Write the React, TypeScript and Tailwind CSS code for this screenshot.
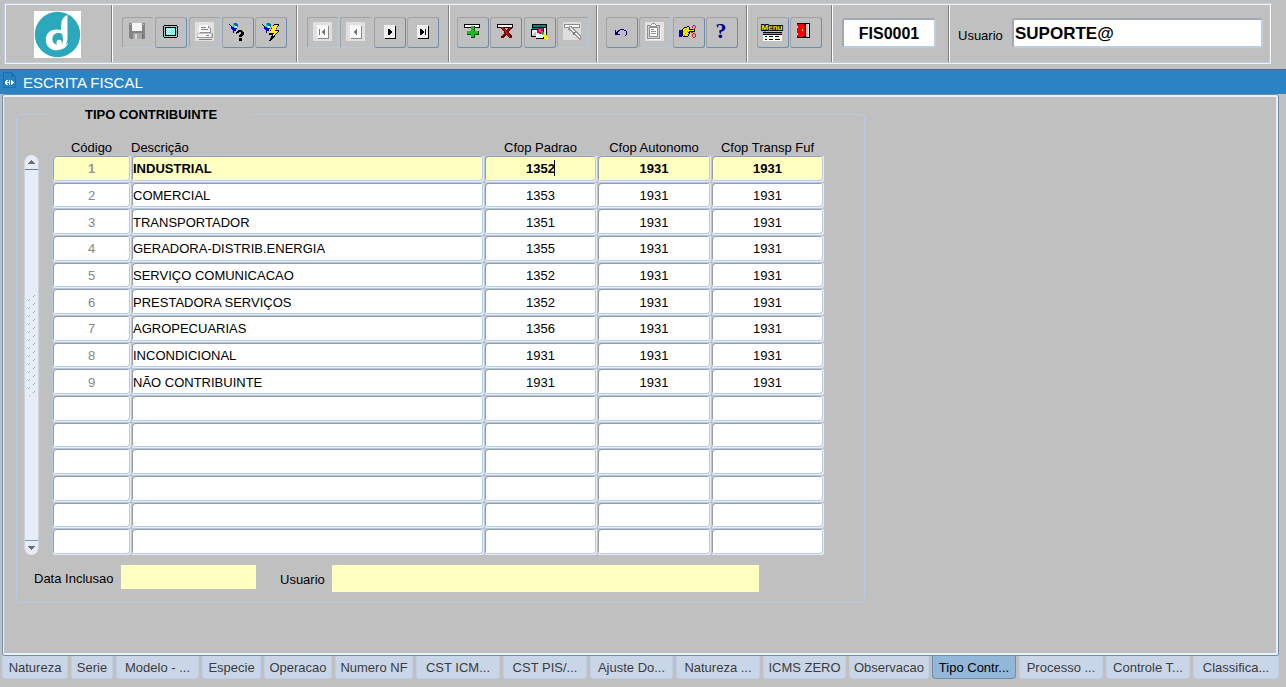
import type { ReactNode } from "react";
import clsx from "clsx";

interface Row {
  codigo: string;
  descricao: string;
  padrao: string;
  autonomo: string;
  transp: string;
}

const ROWS: Row[] = [
  { codigo: "1", descricao: "INDUSTRIAL", padrao: "1352", autonomo: "1931", transp: "1931" },
  { codigo: "2", descricao: "COMERCIAL", padrao: "1353", autonomo: "1931", transp: "1931" },
  { codigo: "3", descricao: "TRANSPORTADOR", padrao: "1351", autonomo: "1931", transp: "1931" },
  { codigo: "4", descricao: "GERADORA-DISTRIB.ENERGIA", padrao: "1355", autonomo: "1931", transp: "1931" },
  { codigo: "5", descricao: "SERVIÇO COMUNICACAO", padrao: "1352", autonomo: "1931", transp: "1931" },
  { codigo: "6", descricao: "PRESTADORA SERVIÇOS", padrao: "1352", autonomo: "1931", transp: "1931" },
  { codigo: "7", descricao: "AGROPECUARIAS", padrao: "1356", autonomo: "1931", transp: "1931" },
  { codigo: "8", descricao: "INCONDICIONAL", padrao: "1931", autonomo: "1931", transp: "1931" },
  { codigo: "9", descricao: "NÃO CONTRIBUINTE", padrao: "1931", autonomo: "1931", transp: "1931" },
];

const EMPTY: Row = { codigo: "", descricao: "", padrao: "", autonomo: "", transp: "" };
const VISIBLE_ROWS = 15;

const COLUMNS: { key: keyof Row; label: string; width: string; align: string }[] = [
  { key: "codigo", label: "Código", width: "w-[79px]", align: "text-center" },
  { key: "descricao", label: "Descrição", width: "w-[353px]", align: "text-left" },
  { key: "padrao", label: "Cfop Padrao", width: "w-[113px]", align: "text-center" },
  { key: "autonomo", label: "Cfop Autonomo", width: "w-[114px]", align: "text-center" },
  { key: "transp", label: "Cfop Transp Fuf", width: "w-[113px]", align: "text-center" },
];

const TABS = [
  { label: "Natureza", width: "w-[66px]" },
  { label: "Serie", width: "w-[42px]" },
  { label: "Modelo - ...", width: "w-[83px]" },
  { label: "Especie", width: "w-[59px]" },
  { label: "Operacao", width: "w-[68px]" },
  { label: "Numero NF", width: "w-[78px]" },
  { label: "CST ICM...", width: "w-[84px]" },
  { label: "CST PIS/...", width: "w-[84px]" },
  { label: "Ajuste Do...", width: "w-[83px]" },
  { label: "Natureza ...", width: "w-[84px]" },
  { label: "ICMS ZERO", width: "w-[83px]" },
  { label: "Observacao", width: "w-[80px]" },
  { label: "Tipo Contr...", width: "w-[84px]" },
  { label: "Processo ...", width: "w-[84px]" },
  { label: "Controle T...", width: "w-[84px]" },
  { label: "Classifica...", width: "w-[86px]" },
];

const ACTIVE_TAB = "Tipo Contr...";

function Icon({ children }: { children: ReactNode }) {
  return (
    <svg
      width="20"
      height="21"
      viewBox="0 0 20 21"
      shapeRendering="crispEdges"
      aria-hidden="true"
      className="shrink-0 overflow-visible"
    >
      {children}
    </svg>
  );
}

function SaveIcon() {
  return (
    <Icon>
      <path d="M1 1h16v16H2l-1-1z" fill="#848484" />
      <path d="M4 1h10v8H4z" fill="#f4f4f4" />
      <path d="M2 2h1v1H2zM15 2h1v1h-1z" fill="#c0c0c0" />
      <path d="M5 11h9v6H5z" fill="#a8a8a8" />
      <path d="M7 12h2v5H7z" fill="#d8d8d8" />
      <path d="M14 12h1v5h-1z" fill="#6a6a6a" />
    </Icon>
  );
}

function ScreenIcon() {
  return (
    <Icon>
      <path d="M3 3h13v1h1v11h-1v1H3v-1H2V4h1z" fill="#000" />
      <path d="M3 4h13v11H3z" fill="#c0c0c0" />
      <path d="M4 5h11v9H4z" fill="#000" />
      <path d="M5 6h9v7H5z" fill="#fff" />
      <path
        d="M5 6h1v1H5zM7 6h1v1H7zM9 6h1v1H9zM11 6h1v1h-1zM13 6h1v1h-1zM6 7h1v1H6zM8 7h1v1H8zM10 7h1v1h-1zM12 7h1v1h-1zM5 8h1v1H5zM7 8h1v1H7zM9 8h1v1H9zM11 8h1v1h-1zM13 8h1v1h-1zM6 9h1v1H6zM8 9h1v1H8zM10 9h1v1h-1zM12 9h1v1h-1zM5 10h1v1H5zM7 10h1v1H7zM9 10h1v1H9zM11 10h1v1h-1zM13 10h1v1h-1zM6 11h1v1H6zM8 11h1v1H8zM10 11h1v1h-1zM12 11h1v1h-1zM5 12h1v1H5zM7 12h1v1H7zM9 12h1v1H9zM11 12h1v1h-1zM13 12h1v1h-1z"
        fill="#7edce6"
      />
    </Icon>
  );
}

function PrintIcon() {
  return (
    <Icon>
      <path d="M0 0h19v19H0z" fill="#e2e2e2" />
      <path d="M5 4h9v1h1v1h1v5H5z" fill="#929292" />
      <path d="M4 3h9v3h2v4H4z" fill="#fafafa" />
      <path d="M6 5h5v1H6zM6 7h7v1H6z" fill="#808080" />
      <path d="M2 11h15v5H2z" fill="#c4c4c4" />
      <path d="M3 12h13v3H3z" fill="#f6f6f6" />
      <path d="M2 15h16v1H2zM17 11h1v4h-1z" fill="#9a9a9a" />
      <path d="M11 13h3v1h-3z" fill="#848484" />
      <path d="M4 17h13v1H4z" fill="#848484" />
    </Icon>
  );
}

function Flashlight() {
  return (
    <>
      <path d="M1 2h1v1h1v1h1v1h1v1H3V4H2V3H1z" fill="#000" />
      <path d="M5 1h2v1h1v2H6v2H4V4h1z" fill="#1fd3e6" />
      <path d="M6 1h3v1h1v3h-1v1H8V4H7V3H6z" fill="#0a6c88" />
      <path d="M7 4h2v2H7z" fill="#a8f4f8" />
      <path d="M3 5h3v1h2v1H7v2H5V8H4V7H3z" fill="#0000e0" />
      <path d="M7 6h2v1H8v2H6v2H5V9h2z" fill="#000060" />
    </>
  );
}

function EnterQueryIcon() {
  return (
    <Icon>
      <Flashlight />
      <path
        d="M7 10h1v1H7zM7 12h1v1H7zM9 14h1v1H9zM7 14h1v1H7zM9 16h1v1H9zM9 18h1v1H9zM11 13h1v1h-1zM15 18h1v1h-1zM17 18h1v1h-1zM15 16h1v1h-1zM17 16h1v1h-1zM17 14h1v1h-1zM17 12h1v1h-1zM17 10h1v1h-1zM15 14h1v1h-1zM16 9h1v1h-1z"
        fill="#f4e600"
      />
      <path d="M10 8h4v1h1v1h1v3h-1v1h-1v1h-3v-2h1v-1h1v-2h-2v1H9v1H8v-2h1V9h1z" fill="#000" />
      <path d="M11 16h3v3h-3z" fill="#000" />
    </Icon>
  );
}

function ExecuteQueryIcon() {
  return (
    <Icon>
      <Flashlight />
      <path d="M13 2h5v1l-3 5h3v1l-8 10H8l3-6H8v-2z" fill="#000" />
      <path d="M13 3h4l-3 6h3l-6 7 2-5H8z" fill="#fff000" />
    </Icon>
  );
}

/* Page with an arrow on it, shared by the record navigation buttons */
function NavIcon({ disabled, children }: { disabled?: boolean; children: ReactNode }) {
  return (
    <Icon>
      {disabled && <path d="M0 0h19v19H0z" fill="#e0e0e0" />}
      <path d="M5 4h11v13H5z" fill={disabled ? "#8c8c8c" : "#000"} />
      <path d="M4 3h11v13H4z" fill={disabled ? "#fafafa" : "#f0f0f0"} />
      <g fill={disabled ? "#7c7c7c" : "#000"}>{children}</g>
    </Icon>
  );
}

function InsertIcon() {
  return (
    <Icon>
      <path d="M1 2h16v4H1z" fill="#000" />
      <path d="M2 3h14v2H2z" fill="#fff" />
      <path d="M8 4h4v5h4v4h-4v3H8v-3H4V9h4z" fill="#005000" />
      <path d="M8 4h3v5h4v3h-4v3H8v-3H4V9h4z" fill="#10c020" />
    </Icon>
  );
}

function DeleteIcon() {
  return (
    <Icon>
      <path d="M1 2h16v4H1z" fill="#000" />
      <path d="M2 3h14v2H2z" fill="#fff" />
      <path
        d="M5 5h3v1h1v1h1v1h1V7h1V6h1V5h3v2h-1v1h-1v1h-1v2h1v1h1v1h1v3h-3v-1h-1v-1h-1v-1h-1v1H9v1H8v1H5v-2h1v-1h1v-1h1V9H7V8H6V7H5z"
        fill="#5c0000"
      />
      <path d="M5 5h2v1h1v1h1v1h1v1h1V8h1V7h1V6h1V5h1v1h-1v1h-1v1h-1v1h-1v2h1v1h1v1h1v2h-1v-1h-1v-1h-1v-1h-1v-1H9v1H8v1H7v1H6v-1h1v-1h1v-1h1V9H8V8H7V7H6V6H5z" fill="#c80c0c" />
    </Icon>
  );
}

function LockIcon() {
  return (
    <Icon>
      <path d="M2 2h15v11H2z" fill="#000" />
      <path d="M3 3h13v2H3z" fill="#108080" />
      <path d="M14 6h2v6h-2z" fill="#e8e8e8" />
      <path d="M1 7h13v10H6v-2H1z" fill="#000" />
      <path d="M2 8h11v8H6v-2H2z" fill="#f2f2f2" />
      <path d="M2 6h11v1H2z" fill="#108080" />
      <path d="M1 14l5-5v5z" fill="#c0c0c0" />
      <path d="M8 6h4v1h1v4h-2v1H9v-1H7V8h1z" fill="#d0004c" />
      <path d="M9 7h2v3H9z" fill="#f838d0" />
      <path d="M11 9h2v1h1v2h1v1h-3v-1h-1z" fill="#10b020" />
      <path d="M13 12h3v1h1v2h1v3h-2v-1h-2v-2h-1z" fill="#f8f000" />
      <path d="M6 16h8v1H6z" fill="#000" />
    </Icon>
  );
}

function ClearIcon() {
  return (
    <Icon>
      <path d="M0 0h18v18H0z" fill="#dedede" />
      <path d="M1 2h16v4H1z" fill="#8c8c8c" />
      <path d="M2 3h14v2H2z" fill="#fafafa" />
      <path d="M5 5h1V4h3v1h1v1h1v1h1v1h1v1h1v1h1v1h1v1h1v1h1v5h-2v-1h-1v-1h-1v-1h-1v-1h-1v-1h-1v-1h-1v-1H9v-1H8v-1H7V9H6V8H5z" fill="#9a9a9a" />
      <path d="M7 5h1v1h1v1h1v1h1v1h1v1h-2V9H9V8H8V7H7zM12 11h2v1h1v1h1v1h1v2h-1v-1h-1v-1h-1v-1h-1v-1h-1z" fill="#ececec" />
      <path d="M10 11h1v-1h1v2h-1v1h-1z" fill="#707070" />
    </Icon>
  );
}

function UndoIcon() {
  return (
    <Icon>
      <path d="M3 8h1v2h1v1h1v1h2v1H3z" fill="#000080" />
      <path d="M5 9h1V8h2V7h4v1h2v1h1v4h-1v1h-1v-1h1V9h-2V8H8v1H7v1H6v1H5z" fill="#000080" />
    </Icon>
  );
}

function ClipboardIcon() {
  return (
    <Icon>
      <path d="M0 0h19v19H0z" fill="#e2e2e2" />
      <path d="M2 3h13v14H2z" fill="#909090" />
      <path d="M3 4h11v12H3z" fill="#d4d4d4" />
      <path d="M4 5h9v10H4z" fill="#909090" />
      <path d="M5 6h7v8H5z" fill="#fafafa" />
      <path d="M6 2h1V1h3v1h1v1h1v2H5V3h1z" fill="#909090" />
      <path d="M7 2h3v1H7zM6 3h5v1H6z" fill="#f2f2f2" />
      <path d="M6 7h3v1H6zM6 9h5v1H6zM6 11h5v1H6z" fill="#909090" />
      <path d="M15 5h1v13H4v-1h11z" fill="#fafafa" />
    </Icon>
  );
}

function HandIcon() {
  return (
    <Icon>
      <path d="M0 8h3v7H0z" fill="#0000e8" />
      <path d="M3 7h1V6h1V5h3V4h2v1h1v2h5v3h-5v2h-1v2H9v1H4v-1H3z" fill="#000" />
      <path d="M4 7h1V6h3V5h2v3h5v1h-5v1H9v1h1v1H9v2H4z" fill="#f4e800" />
      <path d="M4 9h1v1H4zM6 7h1v1H6zM6 11h1v1H6zM8 9h1v1H8zM5 13h1v1H5zM8 12h1v1H8z" fill="#b09a00" />
      <path
        d="M13 4h1V3h2v1h1v2h-1v1h-1v1h-1V7h1V6h1V4h-2v2h-1zM12 10h2v1h2v1h1v3h-1v1h-2v-1h-1v-3h1v3h2v-3h-2v-1h-2z"
        fill="#f01010"
      />
    </Icon>
  );
}

function HelpIcon() {
  return (
    <Icon>
      <text x="9" y="16" textAnchor="middle" fontSize="22" fontWeight="bold" fontFamily="Liberation Serif, serif" fill="#000080">
        ?
      </text>
    </Icon>
  );
}

function MenuIcon() {
  return (
    <Icon>
      <text
        x="9"
        y="8"
        textAnchor="middle"
        fontSize="8"
        fontWeight="bold"
        fontFamily="Liberation Sans, sans-serif"
        fill="#fff000"
        stroke="#000"
        strokeWidth="2"
        paintOrder="stroke"
      >
        Menu
      </text>
      <path d="M0 11h19v8H0z" fill="#fff" />
      <path d="M0 10h19v1H0zM0 12h19v1H0z" fill="#000" />
      <path d="M0 11h19v1H0z" fill="#18c8c8" />
      <path d="M2 14h2v1H2zM6 14h4v1H6zM12 14h4v1h-4zM2 17h2v1H2zM6 17h4v1H6zM12 17h5v1h-5z" fill="#000" />
    </Icon>
  );
}

function ExitIcon() {
  return (
    <Icon>
      <path d="M1 1h13v15H1z" fill="#000" />
      <path d="M10 2h3v13h-3z" fill="#c0c0c0" />
      <path d="M12 2h1v13h-1z" fill="#e4e4e4" />
      <path d="M1 2h7v1h1v11H8v1H1z" fill="#f80000" />
      <path d="M6 7h1v2H6zM1 4h1v2H1zM1 11h1v2H1z" fill="#f8e800" />
    </Icon>
  );
}

function Logo() {
  return (
    <svg width="47" height="47" viewBox="0 0 47 47" role="img" aria-label="Logo">
      <path d="M0 0h47v47H0z" fill="#fff" />
      <circle cx="23.5" cy="23.5" r="22.7" fill="#2ba8bc" />
      <path
        d="M33.500 4C30 5.500 27.600 8 27.400 12.500L27 19C18 16.800 12 21 11.800 28.500C11.600 35.500 17 39.800 23 39.200C29.500 38.600 33.300 34 33.500 27z"
        fill="#fff"
      />
      <path
        d="M27 22.500C22 21 18.200 24 18.400 28.500C18.600 31.500 20.500 33.600 23 33.400C21.800 30.800 23.200 28.600 25.600 28.800C28 29 28.500 31.800 27.200 33.500C29.800 31 29 27.500 28.200 23.200z"
        fill="#2ba8bc"
      />
      <path d="M24 34.500C27 36.500 32 34.500 34 31.500C33 36.500 29 38.800 24 38.500z" fill="#fff" />
    </svg>
  );
}

function ToolButton({ label, disabled, children }: { label: string; disabled?: boolean; children: ReactNode }) {
  return (
    <button
      type="button"
      aria-label={label}
      disabled={disabled}
      className={clsx(
        "flex h-[31px] w-8 shrink-0 items-center justify-center rounded-[3px] border border-t-[#a2a2a6] border-l-[#a2a2a6]",
        disabled ? "border-r-[#b6c8de] border-b-[#b6c8de]" : "border-r-[#6c8cb0] border-b-[#6c8cb0]"
      )}
    >
      {children}
    </button>
  );
}

function Separator() {
  return <div className="w-0.5 shrink-0 border-l border-[#808080] bg-white" />;
}

function ToolGroup({ className, children }: { className: string; children: ReactNode }) {
  return <div className={clsx("flex shrink-0 items-start justify-between pt-3", className)}>{children}</div>;
}

function Toolbar() {
  return (
    <header className="mt-[3px] mr-[15px] ml-1 flex h-[61px] shrink-0 border border-t-[#bccde2] border-r-[#f2f6fb] border-b-[#f2f6fb] border-l-[#bccde2] p-px shadow-[inset_1px_1px_0_#f2f6fb,inset_-1px_-1px_0_#bccde2]">
      <div className="flex w-[105px] shrink-0 items-center justify-center pt-0.5 pr-0.5">
        <Logo />
      </div>
      <Separator />
      <ToolGroup className="w-[183px] px-[9px]">
        <ToolButton label="Salvar" disabled><SaveIcon /></ToolButton>
        <ToolButton label="Tela"><ScreenIcon /></ToolButton>
        <ToolButton label="Imprimir" disabled><PrintIcon /></ToolButton>
        <ToolButton label="Entrar consulta"><EnterQueryIcon /></ToolButton>
        <ToolButton label="Executar consulta"><ExecuteQueryIcon /></ToolButton>
      </ToolGroup>
      <Separator />
      <ToolGroup className="w-[150px] px-[9px]">
        <ToolButton label="Primeiro" disabled>
          <NavIcon disabled><path d="M6 7h1v6H6zM12 7v6h-1v-1h-1v-1H9v-2h1V8h1V7z" /></NavIcon>
        </ToolButton>
        <ToolButton label="Anterior" disabled>
          <NavIcon disabled><path d="M11 7v6h-1v-1H9v-1H8v-2h1V8h1V7z" /></NavIcon>
        </ToolButton>
        <ToolButton label="Próximo">
          <NavIcon><path d="M8 7h2v1h1v1h1v2h-1v1h-1v1H8z" /></NavIcon>
        </ToolButton>
        <ToolButton label="Último">
          <NavIcon><path d="M7 7h2v1h1v1h1v2h-1v1H9v1H7zM12 7h1v6h-1z" /></NavIcon>
        </ToolButton>
      </ToolGroup>
      <Separator />
      <ToolGroup className="w-[146px] px-[7px]">
        <ToolButton label="Inserir registro"><InsertIcon /></ToolButton>
        <ToolButton label="Excluir registro"><DeleteIcon /></ToolButton>
        <ToolButton label="Bloquear registro"><LockIcon /></ToolButton>
        <ToolButton label="Limpar registro" disabled><ClearIcon /></ToolButton>
      </ToolGroup>
      <Separator />
      <ToolGroup className="w-[148px] px-2">
        <ToolButton label="Desfazer"><UndoIcon /></ToolButton>
        <ToolButton label="Lista de valores" disabled><ClipboardIcon /></ToolButton>
        <ToolButton label="Recortar"><HandIcon /></ToolButton>
        <ToolButton label="Ajuda"><HelpIcon /></ToolButton>
      </ToolGroup>
      <Separator />
      <ToolGroup className="w-[83px] px-[9px]">
        <ToolButton label="Menu"><MenuIcon /></ToolButton>
        <ToolButton label="Sair"><ExitIcon /></ToolButton>
      </ToolGroup>
      <Separator />
      <div className="flex w-[115px] shrink-0 items-start pt-[13px] pr-3 pl-[9px]">
        <input
          aria-label="Programa"
          defaultValue="FIS0001"
          className="h-[30px] w-full rounded-[3px] border-2 border-t-[#a0a8b6] border-r-[#bccde2] border-b-[#bccde2] border-l-[#a0a8b6] bg-white pt-0.5 text-center text-base font-bold"
        />
      </div>
      <Separator />
      <div className="flex min-w-0 flex-1 items-start pt-[13px] pr-[6px] pl-2">
        <label htmlFor="usuario-sessao" className="w-[54px] shrink-0 pt-[10px] text-[13px] leading-4">
          Usuario
        </label>
        <input
          id="usuario-sessao"
          defaultValue="SUPORTE@"
          className="h-[30px] min-w-0 flex-1 rounded-[3px] border-2 border-t-[#a0a8b6] border-r-[#bccde2] border-b-[#bccde2] border-l-[#a0a8b6] bg-white pt-0.5 pl-px text-[17px] font-bold"
        />
      </div>
    </header>
  );
}

function TitleBar() {
  return (
    <div className="mt-[5px] flex h-[25px] shrink-0 items-center gap-[7px] border-t border-[#53668a] bg-[#2b83c3] pl-[3px] text-white">
      <svg width="13" height="16" viewBox="0 0 13 16" shapeRendering="crispEdges" aria-hidden="true" className="mb-1">
        <path d="M0 0h8l5 5v11H0z" fill="#1d6fae" />
        <path d="M1 1h7v4h4v10H1z" fill="#2a80c0" />
        <path d="M2 9h1V8h2v1H4v3h1v1H3v-1H2zM6 8h1v5H6zM8 8h1v1h1v1h1v1h-1v1H9v1H8zM3 10h3v1H3z" fill="#fff" />
      </svg>
      <h1 className="pt-0.5 text-[15px] leading-5">ESCRITA FISCAL</h1>
    </div>
  );
}

function ScrollBar() {
  return (
    <div className="flex w-[15px] shrink-0 flex-col rounded-full border-x border-[#c6d4e6] bg-[#e8edf5]">
      <button type="button" aria-label="Subir" className="flex h-[15px] items-center justify-center border-b border-[#6c7c98]">
        <svg width="7" height="4" viewBox="0 0 7 4" shapeRendering="crispEdges">
          <path d="M3 0h1v1h1v1h1v1h1v1H0V3h1V2h1V1h1z" fill="#6a6c84" />
        </svg>
      </button>
      <div className="flex flex-1 items-center justify-center pb-5">
        <svg width="9" height="102" aria-hidden="true" shapeRendering="crispEdges">
          <defs>
            <pattern id="grip" width="9" height="8" patternUnits="userSpaceOnUse">
              <path d="M1 5h1v1H1zM6 1h1v1H6z" fill="#fff" />
              <path d="M1 6h1v1H1zM2 5h1v1H2zM6 2h1v1H6zM7 1h1v1H7z" fill="#8ca4c0" />
            </pattern>
          </defs>
          <rect width="9" height="102" fill="url(#grip)" />
        </svg>
      </div>
      <button type="button" aria-label="Descer" className="flex h-[15px] items-center justify-center border-t border-[#7c9ab4]">
        <svg width="7" height="4" viewBox="0 0 7 4" shapeRendering="crispEdges">
          <path d="M0 0h7v1H6v1H5v1H4v1H3V3H2V2H1V1H0z" fill="#6a6c84" />
        </svg>
      </button>
    </div>
  );
}

function Grid() {
  const rows = Array.from({ length: VISIBLE_ROWS }, (_, i) => ROWS[i] ?? EMPTY);

  return (
    <table className="h-[416px] w-[772px] table-fixed border-separate border-spacing-0">
      <thead>
        <tr className="h-4">
          {COLUMNS.map((col) => (
            <th
              key={col.key}
              scope="col"
              className={clsx("h-4 p-0 pt-0.5 text-[13px] leading-[14px] font-normal", col.width, col.align)}
            >
              {col.label}
            </th>
          ))}
        </tr>
      </thead>
      <tbody>
        {rows.map((row, i) => (
          <tr key={i} className={clsx(i === 0 && "font-bold")}>
            {COLUMNS.map((col) => (
              <td
                key={col.key}
                className={clsx(
                  "relative rounded-[3px] border border-t-[#b4c8e0] border-r-[#e6edf6] border-b-[#e6edf6] border-l-[#b4c8e0] p-0 shadow-[inset_1px_1px_0_#9a9ca4,inset_-1px_-1px_0_#b8cbe4]",
                  i === 0 ? "bg-[#ffffc0]" : "bg-white"
                )}
              >
                <input
                  aria-label={`${col.label} ${i + 1}`}
                  defaultValue={row[col.key]}
                  className={clsx(
                    "block h-5 w-full bg-transparent pt-px text-[13px] outline-none",
                    col.align,
                    col.key === "descricao" && "pl-px",
                    col.key === "codigo" && (i === 0 ? "text-[#8c98a4]" : "text-[#868686]")
                  )}
                />
                {i === 0 && col.key === "padrao" && (
                  <span className="absolute top-1 left-[69px] h-4 w-px bg-black" />
                )}
              </td>
            ))}
          </tr>
        ))}
      </tbody>
    </table>
  );
}

function TipoContribuinte() {
  return (
    <section
      aria-labelledby="tipo-contribuinte"
      className="mt-[17px] ml-3 w-[849px] rounded-[4px] border border-[#b8cbe4] pb-[10px]"
    >
      <h2
        id="tipo-contribuinte"
        className="-mt-2 ml-[34px] w-[201px] bg-[#c1c1c1] pl-[34px] text-[13px] leading-4 font-bold"
      >
        TIPO CONTRIBUINTE
      </h2>
      <div className="mt-4 flex gap-[13px] pl-[7px]">
        <div className="flex pt-4">
          <ScrollBar />
        </div>
        <Grid />
      </div>
      <div className="mt-[10px] flex items-start pl-[17px] text-[13px] leading-4">
        <label htmlFor="data-inclusao" className="w-[87px] pt-[6px]">
          Data Inclusao
        </label>
        <input id="data-inclusao" className="h-6 w-[135px] bg-[#ffffc0]" />
        <label htmlFor="usuario-inclusao" className="ml-6 w-[52px] pt-[7px]">
          Usuario
        </label>
        <input id="usuario-inclusao" className="h-[27px] w-[427px] bg-[#ffffc0]" />
      </div>
    </section>
  );
}

function TabStrip() {
  return (
    <nav role="tablist" className="mb-2 ml-0.5 flex h-[23px] shrink-0 gap-[3px]">
      {TABS.map(({ label, width }) => {
        const active = label === ACTIVE_TAB;
        return (
          <button
            key={label}
            type="button"
            role="tab"
            aria-selected={active}
            className={clsx(
              "flex shrink-0 justify-center rounded-b-[4px] border border-t-0 pt-1 text-[13px] leading-4 whitespace-nowrap",
              width,
              active ? "border-[#6c8cb0] bg-[#93b7d8] text-black" : "border-[#bfd0e6] bg-[#c9d6e8] text-[#3c3c3c]"
            )}
          >
            {label}
          </button>
        );
      })}
    </nav>
  );
}

export default function App() {
  return (
    <div className="flex h-screen flex-col overflow-hidden bg-[#c0c0c0] font-['Liberation_Sans',Arial,sans-serif] text-black">
      <Toolbar />
      <TitleBar />
      <main className="mr-[7px] ml-0.5 flex min-h-0 flex-1 rounded-[3px] border border-[#6c8cb0]">
        <div className="flex-1 rounded-[2px] border-2 border-l border-[#eaf0f8]">
          <TipoContribuinte />
        </div>
      </main>
      <TabStrip />
    </div>
  );
}
